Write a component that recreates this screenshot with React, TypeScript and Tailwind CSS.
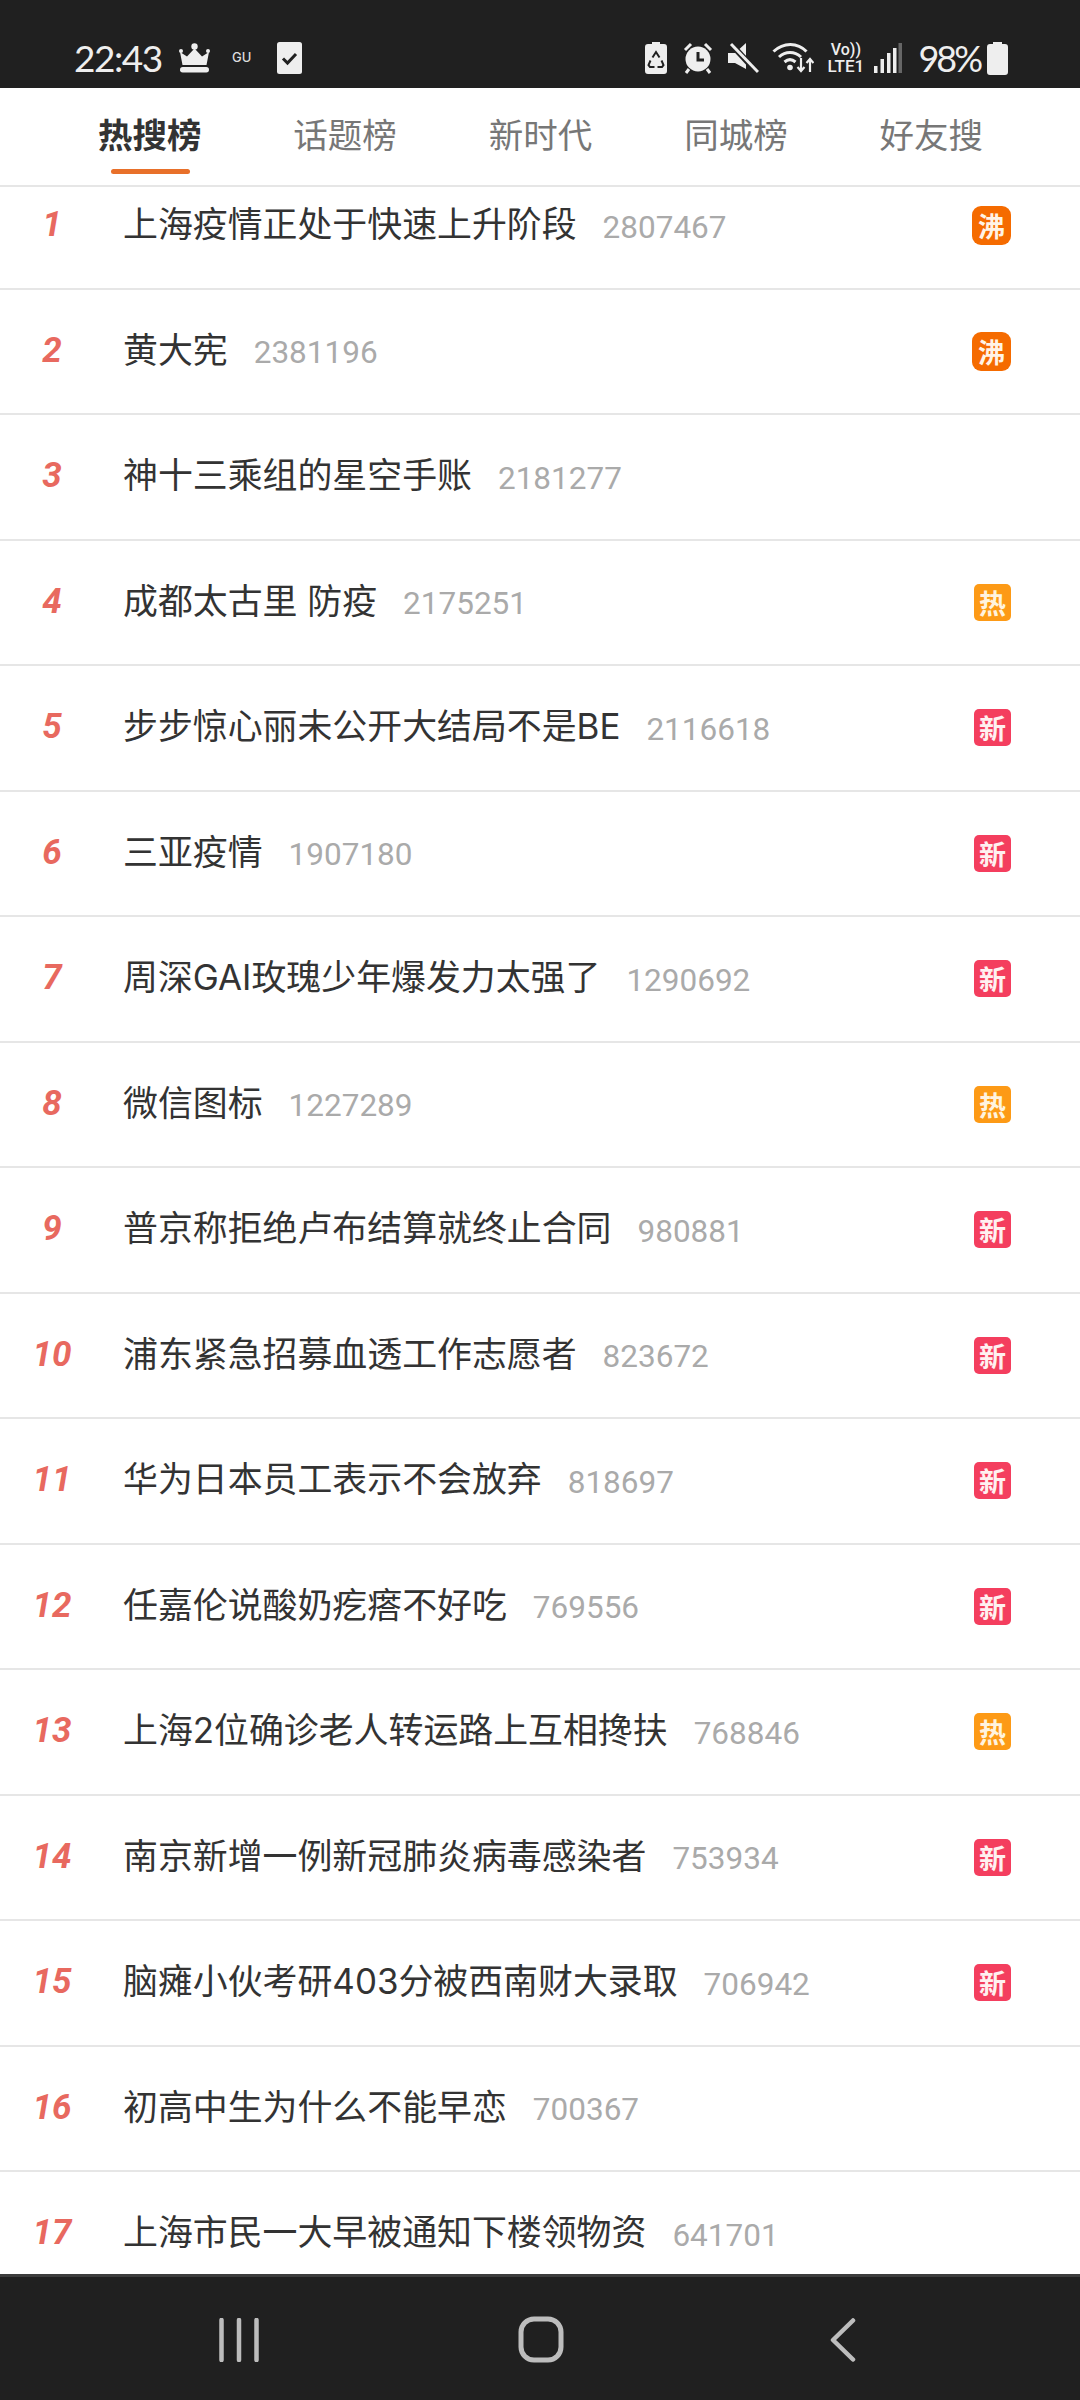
const rows: [string, string, string][] = [
  ["上海疫情正处于快速上升阶段", "2807467", "沸"],
  ["黄大宪", "2381196", "沸"],
  ["神十三乘组的星空手账", "2181277", ""],
  ["成都太古里 防疫", "2175251", "热"],
  ["步步惊心丽未公开大结局不是BE", "2116618", "新"],
  ["三亚疫情", "1907180", "新"],
  ["周深GAI玫瑰少年爆发力太强了", "1290692", "新"],
  ["微信图标", "1227289", "热"],
  ["普京称拒绝卢布结算就终止合同", "980881", "新"],
  ["浦东紧急招募血透工作志愿者", "823672", "新"],
  ["华为日本员工表示不会放弃", "818697", "新"],
  ["任嘉伦说酸奶疙瘩不好吃", "769556", "新"],
  ["上海2位确诊老人转运路上互相搀扶", "768846", "热"],
  ["南京新增一例新冠肺炎病毒感染者", "753934", "新"],
  ["脑瘫小伙考研403分被西南财大录取", "706942", "新"],
  ["初高中生为什么不能早恋", "700367", ""],
  ["上海市民一大早被通知下楼领物资", "641701", ""],
];

const tabs = ["热搜榜", "话题榜", "新时代", "同城榜", "好友搜"];

function Badge({ label }: { label: string }) {
  if (label === "沸") {
    return (
      <div className="flex h-[39px] w-[39px] items-center justify-center rounded-[9px] bg-[#f56b00] text-[27px] font-bold leading-none text-[#fff4e6]">
        沸
      </div>
    );
  }
  if (label === "热") {
    return (
      <div className="flex h-[37px] w-[37px] items-center justify-center rounded-[5px] bg-[#fd9a16] text-[27px] font-bold leading-none text-[#fff3df]">
        热
      </div>
    );
  }
  if (label === "新") {
    return (
      <div className="flex h-[37px] w-[37px] items-center justify-center rounded-[5px] bg-[#f43e5e] text-[27px] font-bold leading-none text-[#fff0f0]">
        新
      </div>
    );
  }
  return null;
}

function StatusLeft() {
  return (
    <div className="flex items-center">
      <span className="ml-[74px] w-[88px] font-['Lato',sans-serif] text-[37px] font-normal leading-none tracking-[-1.5px] text-[#eeeeee]">
        22:43
      </span>
      <svg className="ml-[16px]" width="33" height="30" viewBox="0 0 33 30">
        <circle cx="16.5" cy="3.5" r="3.2" fill="#eee" />
        <circle cx="3" cy="8" r="2" fill="#eee" />
        <circle cx="30" cy="8" r="2" fill="#eee" />
        <path d="M2 9l7 4.500 7.500-8 7.500 8 7-4.500-2.500 13H4.500z" fill="#eee" />
        <rect x="2" y="24" width="29" height="5.500" rx="2.700" fill="#eee" />
      </svg>
      <span className="ml-[21px] w-[24px] font-['Inter',sans-serif] text-[13px] font-medium leading-none text-[#dddddd]">
        GU
      </span>
      <svg className="ml-[21px]" width="25" height="32" viewBox="0 0 25 32">
        <rect x="0" y="0" width="25" height="32" rx="2.500" fill="#eee" />
        <path d="M6 16.500l4.500 4.500 8.500-9" fill="none" stroke="#202020" strokeWidth="3" />
      </svg>
    </div>
  );
}

function StatusRight() {
  return (
    <div className="flex items-center pr-[72px]">
      <svg width="22" height="32" viewBox="0 0 22 32">
        <path d="M7 0h8v2h4a3 3 0 0 1 3 3v24a3 3 0 0 1-3 3H3a3 3 0 0 1-3-3V5a3 3 0 0 1 3-3h4z" fill="#eee" />
        <path d="M7.500 15.500L11 10l3.500 5.500M5.500 18.500L3.500 23l1.500 2h4.500M16.500 18.500l2 4.500-1.500 2h-4.500" fill="none" stroke="#202020" strokeWidth="2" />
      </svg>
      <svg className="ml-[16px]" width="30" height="32" viewBox="0 0 30 32">
        <circle cx="15" cy="17" r="12.500" fill="#eee" />
        <path d="M15 10v8h6" fill="none" stroke="#202020" strokeWidth="3" />
        <path d="M2 8l6-6M28 8l-6-6M6 27l-3 4M24 27l3 4" stroke="#eee" strokeWidth="3" />
      </svg>
      <svg className="ml-[15px]" width="31" height="32" viewBox="0 0 31 32">
        <path d="M0 11h7l11-10v26L7 21H0z" fill="#eee" />
        <path d="M2 1l27 29" stroke="#202020" strokeWidth="6" />
        <path d="M3 2l27 28" stroke="#eee" strokeWidth="3" />
      </svg>
      <svg className="ml-[13px]" width="42" height="32" viewBox="0 0 42 32">
        <path d="M1.500 9.500c10-9.500 24-9.500 33 0" fill="none" stroke="#eee" strokeWidth="3" />
        <path d="M7 15c6.500-6 15.500-6 22 0" fill="none" stroke="#eee" strokeWidth="3" />
        <path d="M12.500 20c3.500-3 7.500-3 11 0" fill="none" stroke="#eee" strokeWidth="3" />
        <circle cx="18" cy="25.500" r="2.800" fill="#eee" />
        <path d="M29 16v13M25.500 25l3.500 4 3.500-4M38 30V17M34.500 21l3.500-4 3.500 4" fill="none" stroke="#eee" strokeWidth="2.200" />
      </svg>
      <div className="ml-[12px] flex w-[39px] flex-col items-center font-['Roboto',sans-serif] font-medium leading-none text-[#eeeeee]">
        <span className="text-[16px] leading-[16px]">Vo))</span>
        <span className="text-[17px] leading-[16px]">LTE1</span>
      </div>
      <svg className="ml-[9px]" width="28" height="32" viewBox="0 0 28 32">
        <rect x="0" y="24" width="3.500" height="7" fill="#eee" />
        <rect x="6.500" y="17" width="3.500" height="14" fill="#eee" />
        <rect x="13" y="11" width="3.500" height="20" fill="#eee" />
        <rect x="19" y="6" width="3.500" height="25" fill="#eee" />
        <rect x="24.500" y="1" width="3.500" height="30" fill="#666" />
      </svg>
      <span className="ml-[16px] font-['Lato',sans-serif] text-[36px] font-normal leading-none tracking-[-3px] text-[#eeeeee]">
        98%
      </span>
      <svg className="ml-[7px]" width="21" height="33" viewBox="0 0 21 33">
        <path d="M6 0h9v2h3a3 3 0 0 1 3 3v25a3 3 0 0 1-3 3H3a3 3 0 0 1-3-3V5a3 3 0 0 1 3-3h3z" fill="#eee" />
      </svg>
    </div>
  );
}

export default function App() {
  return (
    <div className="flex h-screen w-[1080px] flex-col overflow-hidden bg-white font-['Noto_Sans_CJK_SC','Noto_Sans',sans-serif]">
      <div className="flex h-[88px] shrink-0 items-end justify-between bg-[#202020] pb-[12px]">
        <StatusLeft />
        <StatusRight />
      </div>

      <div className="grid h-[99px] shrink-0 grid-cols-5 border-b-2 border-[#e6e6e6] pl-[52px] pr-[51px]">
        {tabs.map((tab, i) => (
          <div key={tab} className="relative flex justify-center">
            <span
              className={
                i === 0
                  ? "mt-[20px] text-[34.5px] font-bold leading-[50px] text-[#333333]"
                  : "mt-[20px] text-[34.5px] leading-[50px] text-[#777777]"
              }
            >
              {tab}
            </span>
            {i === 0 && (
              <div className="absolute left-[59px] top-[81px] h-[5px] w-[79px] rounded-full bg-[#e8702a]" />
            )}
          </div>
        ))}
      </div>

      <div className="min-h-0 flex-1 overflow-hidden">
        <div className="-mt-[23px]">
          {rows.map(([title, count, badge], i) => (
            <div
              key={title}
              className="flex h-[125.5px] items-center border-b-2 border-[#e6e6e6] pr-[69px]"
            >
              <div className="mb-[2px] w-[104px] text-center font-['Roboto',sans-serif] text-[35px] font-bold italic leading-none text-[#e8695f]">
                {i + 1}
              </div>
              <div className="ml-[19px] flex min-w-0 flex-1 items-center">
                <span className="mb-[2px] font-['Inter','Noto_Sans_CJK_SC',sans-serif] text-[34.9px] leading-none text-[#333333]">
                  {title}
                </span>
                <span className="ml-[26px] mt-[3px] font-['Roboto',sans-serif] text-[31.5px] leading-none text-[#aaaaaa]">
                  {count}
                </span>
              </div>
              <Badge label={badge} />
            </div>
          ))}
        </div>
      </div>

      <div className="flex h-[126px] shrink-0 items-start border-t-[3px] border-[#3c3c3c] bg-[#202020]">
        <svg className="ml-[219px] mt-[41px]" width="40" height="44" viewBox="0 0 40 44">
          <path d="M2.500 2v40M20 2v40M37.500 2v40" stroke="#bdbdbd" strokeWidth="4.500" strokeLinecap="round" />
        </svg>
        <svg className="ml-[259px] mt-[39px]" width="46" height="47" viewBox="0 0 46 47">
          <rect x="3" y="3" width="40" height="41" rx="13" fill="none" stroke="#bdbdbd" strokeWidth="5" />
        </svg>
        <svg className="ml-[266px] mt-[41px]" width="26" height="44" viewBox="0 0 26 44">
          <path d="M23 2.500L3 22l20 19.500" fill="none" stroke="#bdbdbd" strokeWidth="4.500" strokeLinecap="round" strokeLinejoin="round" />
        </svg>
      </div>
    </div>
  );
}
